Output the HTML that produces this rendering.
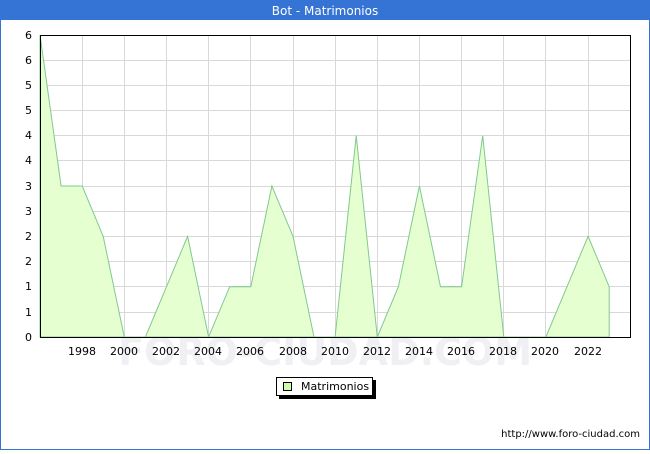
<!DOCTYPE html><html><head><style>body{margin:0;width:650px;height:450px;overflow:hidden;background:#fff;font-family:"DejaVu Sans","Liberation Sans",sans-serif}</style></head><body>
<svg width="650" height="450" xmlns="http://www.w3.org/2000/svg" font-family="DejaVu Sans, Liberation Sans, sans-serif">
<rect x="0.5" y="0.5" width="649" height="449" fill="#fff" stroke="#3574d4"/>
<rect x="0" y="0" width="650" height="20" fill="#3574d4"/>
<text x="325" y="15" fill="#fff" font-size="12" text-anchor="middle">Bot - Matrimonios</text>
<g stroke="#d8d8d8" stroke-width="1">
<line x1="40" x2="630" y1="60.5" y2="60.5"/><line x1="40" x2="630" y1="85.5" y2="85.5"/><line x1="40" x2="630" y1="110.5" y2="110.5"/><line x1="40" x2="630" y1="135.5" y2="135.5"/><line x1="40" x2="630" y1="160.5" y2="160.5"/><line x1="40" x2="630" y1="186.5" y2="186.5"/><line x1="40" x2="630" y1="211.5" y2="211.5"/><line x1="40" x2="630" y1="236.5" y2="236.5"/><line x1="40" x2="630" y1="261.5" y2="261.5"/><line x1="40" x2="630" y1="286.5" y2="286.5"/><line x1="40" x2="630" y1="312.5" y2="312.5"/>
<line y1="35" y2="337" x1="82.5" x2="82.5"/><line y1="35" y2="337" x1="124.5" x2="124.5"/><line y1="35" y2="337" x1="166.5" x2="166.5"/><line y1="35" y2="337" x1="208.5" x2="208.5"/><line y1="35" y2="337" x1="250.5" x2="250.5"/><line y1="35" y2="337" x1="293.5" x2="293.5"/><line y1="35" y2="337" x1="335.5" x2="335.5"/><line y1="35" y2="337" x1="377.5" x2="377.5"/><line y1="35" y2="337" x1="419.5" x2="419.5"/><line y1="35" y2="337" x1="461.5" x2="461.5"/><line y1="35" y2="337" x1="503.5" x2="503.5"/><line y1="35" y2="337" x1="545.5" x2="545.5"/><line y1="35" y2="337" x1="588.5" x2="588.5"/>
</g>
<text x="325" y="365" font-size="38" fill="#f0f0f4" text-anchor="middle" font-weight="bold">FORO-CIUDAD.COM</text>
<polygon fill="#e6ffd0" stroke="#80c890" stroke-width="1" points="40,337 40,35 61.1,186 82.2,186 103.2,236.3 124.3,337 145.4,337 166.5,286.7 187.6,236.3 208.6,337 229.7,286.7 250.8,286.7 271.9,186 293,236.3 314,337 335.1,337 356.2,135.7 377.3,337 398.4,286.7 419.4,186 440.5,286.7 461.6,286.7 482.7,135.7 503.8,337 524.8,337 545.9,337 567,286.7 588.1,236.3 609.2,286.7 609.2,337"/>
<rect x="40.5" y="35.5" width="590" height="302" fill="none" stroke="#000"/>
<g font-size="11" fill="#000" text-anchor="end">
<text x="32" y="341">0</text><text x="32" y="316">1</text><text x="32" y="290">1</text><text x="32" y="265">2</text><text x="32" y="240">2</text><text x="32" y="215">3</text><text x="32" y="190">3</text><text x="32" y="164">4</text><text x="32" y="139">4</text><text x="32" y="114">5</text><text x="32" y="89">5</text><text x="32" y="64">6</text><text x="32" y="39">6</text>
</g>
<g font-size="11" fill="#000" text-anchor="middle">
<text x="82" y="355">1998</text><text x="124" y="355">2000</text><text x="166" y="355">2002</text><text x="208" y="355">2004</text><text x="250" y="355">2006</text><text x="293" y="355">2008</text><text x="335" y="355">2010</text><text x="377" y="355">2012</text><text x="419" y="355">2014</text><text x="461" y="355">2016</text><text x="503" y="355">2018</text><text x="545" y="355">2020</text><text x="588" y="355">2022</text>
</g>
<rect x="279" y="380" width="97" height="19" fill="#000"/>
<rect x="276.5" y="377.5" width="96" height="18" fill="#fff" stroke="#000"/>
<rect x="283.5" y="382.5" width="8" height="8" fill="#ccffaa" stroke="#000"/>
<text x="301" y="390" font-size="11">Matrimonios</text>
<text x="640" y="437" font-size="10" text-anchor="end">http://www.foro-ciudad.com</text>
</svg>
</body></html>
